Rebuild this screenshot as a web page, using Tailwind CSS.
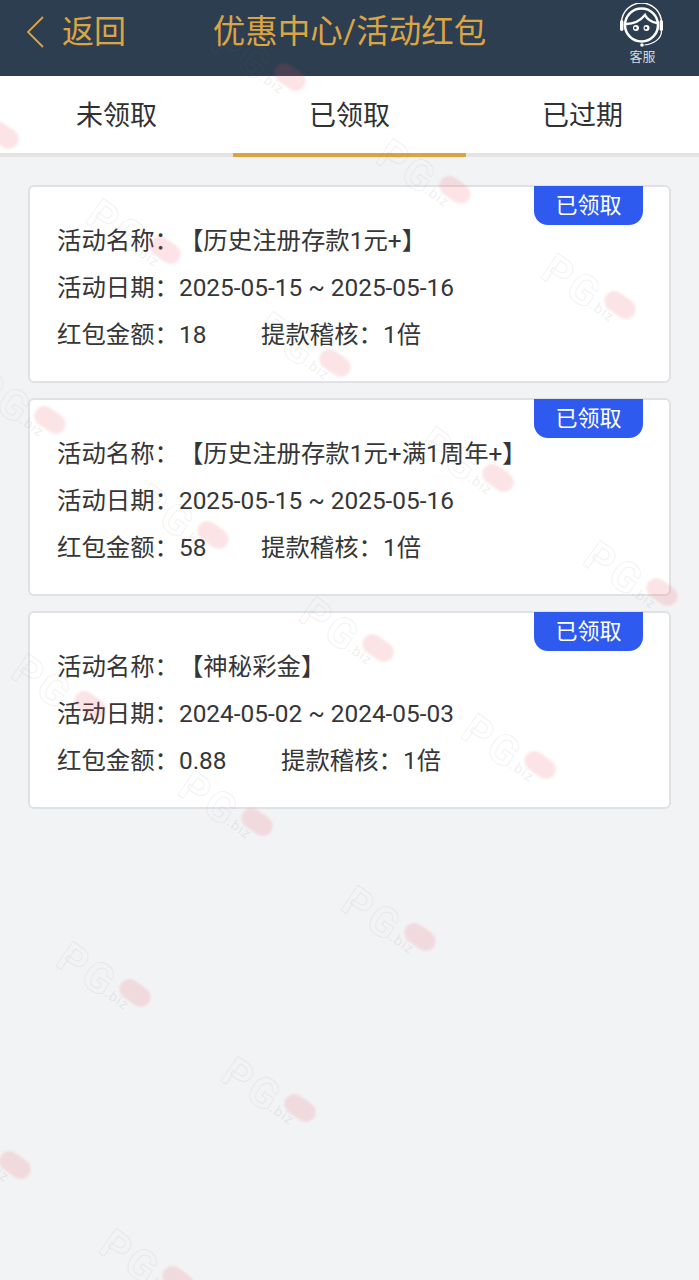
<!DOCTYPE html>
<html lang="zh-CN">
<head>
    <meta charset="UTF-8">
    <meta name="viewport" content="width=device-width, initial-scale=1.0">
    <title>优惠中心/活动红包</title>
    <script src="https://cdn.jsdelivr.net/npm/@tailwindcss/browser@4"></script>
</head>
<body class="relative h-[1280px] overflow-hidden bg-[#f2f3f5] font-['Roboto','Noto_Sans_CJK_SC',sans-serif]">
    <!-- Header -->
    <header class="flex h-[76px] items-start justify-between bg-[#2d3e50] text-[#dca544]">
        <div class="flex h-[64px] w-[140px] items-center pl-[26px]">
            <svg class="h-[32px] w-[18px]" viewBox="0 0 18 32" fill="none" stroke="#dca544" stroke-width="1.8"><path d="M17 1 2 16l15 15"/></svg>
            <span class="ml-[18px] text-[32px] leading-none">返回</span>
        </div>
        <h1 class="flex h-[64px] items-center text-[32.5px] leading-none">优惠中心/活动红包</h1>
        <div class="flex w-[140px] flex-col items-center pl-[27px] pt-[3px]">
            <svg class="h-[46px] w-[46px]" viewBox="0 0 46 46" fill="none" stroke="#fff">
                <circle cx="22.5" cy="22" r="16.5" stroke-width="2.5"/>
                <path d="M2.5 20a20 20 0 0 1 40 0" stroke-width="1.4"/>
                <rect x="1" y="17" width="3.4" height="11" rx="1.7" fill="#fff" stroke="none"/>
                <rect x="40.6" y="17" width="3.4" height="11" rx="1.7" fill="#fff" stroke="none"/>
                <path d="M7 21c7 0 14-3 19-9 2 4 6 7 12 8" stroke-width="2.4"/>
                <path d="M42.5 28c0 8-8 13-17 14" stroke-width="1.2"/>
                <circle cx="23" cy="42" r="1.8" fill="#fff" stroke="none"/>
                <circle cx="17" cy="25" r="3" fill="#fff" stroke="none"/>
                <circle cx="27.5" cy="25" r="3" fill="#fff" stroke="none"/>
                <circle cx="16.4" cy="25" r="1.3" fill="#2d3e50" stroke="none"/>
                <circle cx="26.9" cy="25" r="1.3" fill="#2d3e50" stroke="none"/>
            </svg>
            <span class="mt-[1px] text-[13px] leading-none text-[#d5d8dc]">客服</span>
        </div>
    </header>

    <!-- Tabs -->
    <nav class="grid h-[81px] grid-cols-3 border-b-4 border-[#e4e4e4] bg-white text-[27px] text-[#303133]">
        <div class="-mb-[4px] flex items-center justify-center py-[4px]">未领取</div>
        <div class="-mb-[4px] flex items-center justify-center border-b-4 border-[#d9a441] pt-[4px]">已领取</div>
        <div class="-mb-[4px] flex items-center justify-center py-[4px]">已过期</div>
    </nav>

    <!-- Cards -->
    <main class="flex flex-col gap-[15px] px-[28px] pt-[28px] text-[24.4px] leading-[47px] text-[#363636] [text-spacing-trim:space-all]">
        <section class="relative h-[198px] rounded-[6px] border-2 border-[#dfe1e5] bg-white pl-[27px] pt-[30px]">
            <span class="absolute right-[26px] -top-[1px] h-[39px] w-[109px] rounded-b-[14px] bg-[#2f5af0] text-center text-[22px] leading-[39px] text-white">已领取</span>
            <p>活动名称：<span>【历史注册存款1元+】</span></p>
            <p>活动日期：2025-05-15 ~ 2025-05-16</p>
            <p class="flex"><span class="w-[204px]">红包金额：18</span><span>提款稽核：1倍</span></p>
        </section>
        <section class="relative h-[198px] rounded-[6px] border-2 border-[#dfe1e5] bg-white pl-[27px] pt-[30px]">
            <span class="absolute right-[26px] -top-[1px] h-[39px] w-[109px] rounded-b-[14px] bg-[#2f5af0] text-center text-[22px] leading-[39px] text-white">已领取</span>
            <p>活动名称：<span>【历史注册存款1元+满1周年+】</span></p>
            <p>活动日期：2025-05-15 ~ 2025-05-16</p>
            <p class="flex"><span class="w-[204px]">红包金额：58</span><span>提款稽核：1倍</span></p>
        </section>
        <section class="relative h-[198px] rounded-[6px] border-2 border-[#dfe1e5] bg-white pl-[27px] pt-[30px]">
            <span class="absolute right-[26px] -top-[1px] h-[39px] w-[109px] rounded-b-[14px] bg-[#2f5af0] text-center text-[22px] leading-[39px] text-white">已领取</span>
            <p>活动名称：<span>【神秘彩金】</span></p>
            <p>活动日期：2024-05-02 ~ 2024-05-03</p>
            <p class="flex"><span class="w-[224px]">红包金额：0.88</span><span>提款稽核：1倍</span></p>
        </section>
    </main>

    <!-- Watermark -->
    <div id="marks" class="pointer-events-none absolute inset-0 overflow-hidden"></div>

    <script>
        // centre of the red pill on each watermark
        const marks = [[290,77],[3,135],[455,190],[165,250],[620,305],[335,363],[50,420],[498,478],[213,535],[662,592],[378,648],[90,705],[540,765],[257,822],[420,937],[135,993],[300,1108],[15,1165],[178,1280]];
        const box = document.getElementById('marks');
        marks.forEach(([x, y]) => {
            const el = document.createElement('div');
            el.className = 'absolute h-[40px] w-[100px] origin-[80px_20px] rotate-[35deg]';
            el.style.left = (x - 80) + 'px';
            el.style.top = (y - 20) + 'px';
            el.innerHTML = '<span class="absolute -left-[3px] top-[6px] font-[\'DejaVu_Sans\'] text-[42px] font-bold leading-[46px] tracking-[3px] text-transparent [-webkit-text-stroke:1px_rgba(120,120,120,0.11)]">PG</span>' +
                '<span class="absolute left-[63px] top-[10px] h-[20px] w-[34px] rounded-full bg-[#e8485a]/15 blur-[1px]"></span>' +
                '<span class="absolute left-[56px] top-[28px] text-[14px] leading-none tracking-[1px] text-[#888]/15">.biz</span>';
            box.appendChild(el);
        });
    </script>
</body>
</html>
